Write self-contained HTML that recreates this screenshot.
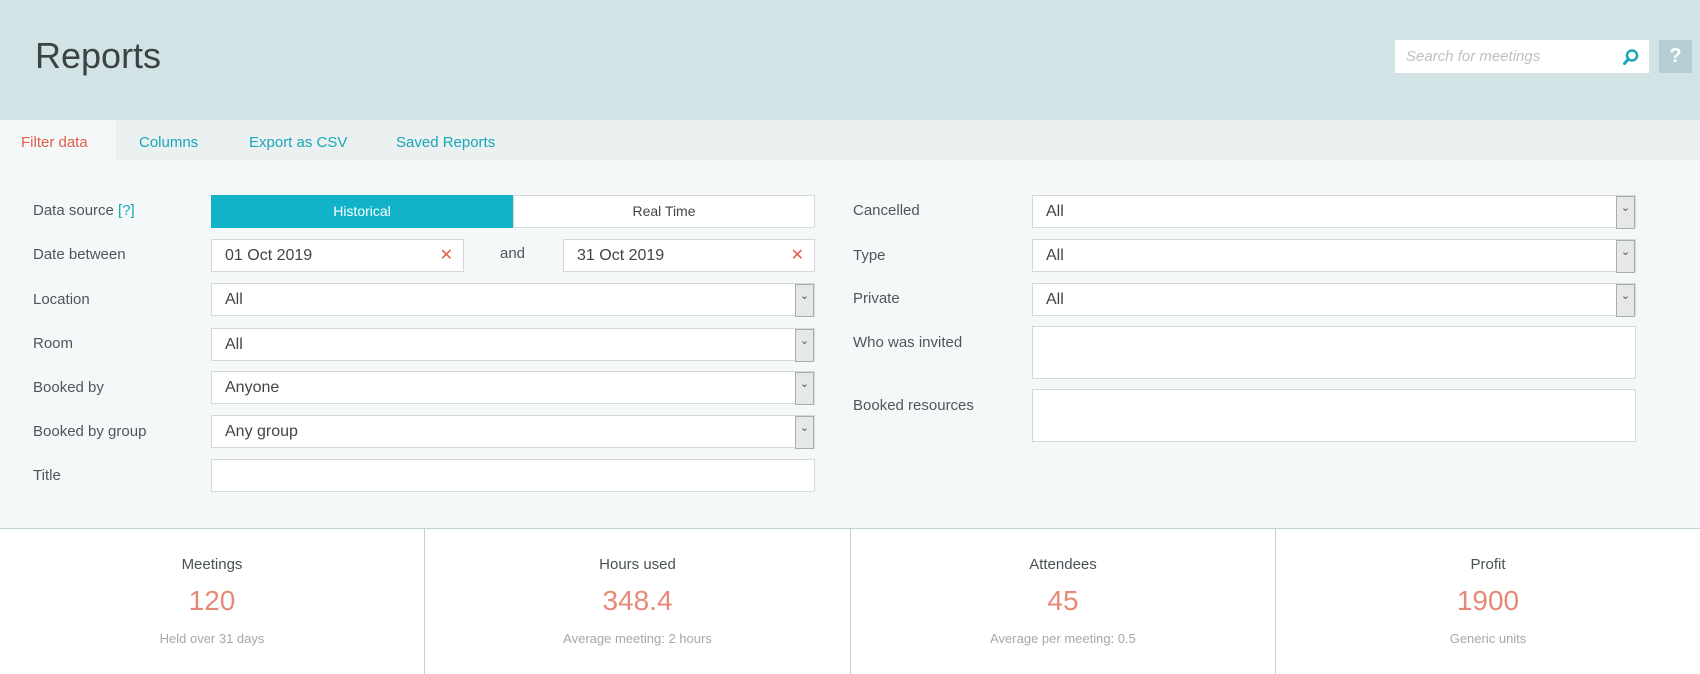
<!DOCTYPE html>
<html><head><meta charset="utf-8"><style>
*{box-sizing:border-box;margin:0;padding:0}
body{width:1700px;height:674px;overflow:hidden;background:#f5f8f8;font-family:"Liberation Sans",sans-serif;color:#555d60;position:relative}
.a{position:absolute}
.hdr{left:0;top:0;width:1700px;height:120px;background:#d2e3e6}
.tabs{left:0;top:120px;width:1700px;height:40px;background:#ebf0f1}
.tab{top:123px;height:40px;line-height:40px;font-size:15px;color:#1aa6b7}
.lbl{font-size:15px;color:#4f5659}
.box{background:#fff;border:1px solid #d4d9da;height:33px;font-size:16px;line-height:31px;padding-left:13px;color:#444}
.sel::after{content:"⌄";position:absolute;right:0;top:0;width:17px;height:31px;background:#e5e7e8;border:1px solid #a9adae;font-size:11px;line-height:22px;text-align:center;color:#555}
.x{position:absolute;right:10px;top:0;color:#e0604c;font-size:16px}
.stat{top:528px;height:146px;background:#fff;text-align:center;border-top:1px solid #bfd3d6}
.st{margin-top:27px;font-size:15px;color:#4a5154}
.sn{margin-top:12px;font-size:28px;color:#e68a78}
.ss{margin-top:14px;font-size:13px;color:#a3a9ab}
</style></head><body>
<div class="a hdr"></div>
<div class="a" style="left:35px;top:35px;font-size:36px;color:#3d4244">Reports</div>
<div class="a" style="left:1395px;top:40px;width:254px;height:33px;background:#fff;font-size:15px;font-style:italic;color:#bcc1c3;line-height:33px;padding-left:11px">Search for meetings</div>
<svg class="a" style="left:1622px;top:48px" width="18" height="18" viewBox="0 0 18 18"><circle cx="10" cy="7.5" r="5" fill="none" stroke="#1aa6b7" stroke-width="2.5"/><path d="M6.5 11 L2.5 15.5" stroke="#1aa6b7" stroke-width="3" stroke-linecap="round"/></svg>
<div class="a" style="left:1659px;top:40px;width:33px;height:33px;background:#b6cdd3;color:#fff;font-weight:bold;font-size:20px;text-align:center;line-height:33px">?</div>
<div class="a tabs"></div>
<div class="a" style="left:0;top:120px;width:116px;height:40px;background:#f5f8f8"></div>
<div class="a tab" style="left:21px;color:#e0604c">Filter data</div>
<div class="a tab" style="left:139px">Columns</div>
<div class="a tab" style="left:249px">Export as CSV</div>
<div class="a tab" style="left:396px">Saved Reports</div>

<div class="a lbl" style="left:33px;top:202px">Data source <span style="color:#1aa6b7">[?]</span></div>
<div class="a" style="left:211px;top:195px;width:302px;height:33px;background:#12b3c9;color:#fff;font-size:14px;text-align:center;line-height:33px">Historical</div>
<div class="a" style="left:513px;top:195px;width:302px;height:33px;background:#fff;border:1px solid #d4d9da;color:#444;font-size:14px;text-align:center;line-height:31px">Real Time</div>

<div class="a lbl" style="left:33px;top:246px">Date between</div>
<div class="a box" style="left:211px;top:239px;width:253px">01 Oct 2019<span class="x">✕</span></div>
<div class="a lbl" style="left:500px;top:245px">and</div>
<div class="a box" style="left:563px;top:239px;width:252px">31 Oct 2019<span class="x">✕</span></div>

<div class="a lbl" style="left:33px;top:291px">Location</div>
<div class="a box sel" style="left:211px;top:283px;width:604px">All</div>
<div class="a lbl" style="left:33px;top:335px">Room</div>
<div class="a box sel" style="left:211px;top:328px;width:604px">All</div>
<div class="a lbl" style="left:33px;top:379px">Booked by</div>
<div class="a box sel" style="left:211px;top:371px;width:604px">Anyone</div>
<div class="a lbl" style="left:33px;top:423px">Booked by group</div>
<div class="a box sel" style="left:211px;top:415px;width:604px">Any group</div>
<div class="a lbl" style="left:33px;top:467px">Title</div>
<div class="a box" style="left:211px;top:459px;width:604px"></div>

<div class="a lbl" style="left:853px;top:202px">Cancelled</div>
<div class="a box sel" style="left:1032px;top:195px;width:604px">All</div>
<div class="a lbl" style="left:853px;top:247px">Type</div>
<div class="a box sel" style="left:1032px;top:239px;width:604px">All</div>
<div class="a lbl" style="left:853px;top:290px">Private</div>
<div class="a box sel" style="left:1032px;top:283px;width:604px">All</div>
<div class="a lbl" style="left:853px;top:334px">Who was invited</div>
<div class="a box" style="left:1032px;top:326px;width:604px;height:53px"></div>
<div class="a lbl" style="left:853px;top:397px">Booked resources</div>
<div class="a box" style="left:1032px;top:389px;width:604px;height:53px"></div>

<div class="a stat" style="left:0;width:424px"><div class="st">Meetings</div><div class="sn">120</div><div class="ss">Held over 31 days</div></div>
<div class="a stat" style="left:424px;width:426px;border-left:1px solid #bfd3d6"><div class="st">Hours used</div><div class="sn">348.4</div><div class="ss">Average meeting: 2 hours</div></div>
<div class="a stat" style="left:850px;width:425px;border-left:1px solid #bfd3d6"><div class="st">Attendees</div><div class="sn">45</div><div class="ss">Average per meeting: 0.5</div></div>
<div class="a stat" style="left:1275px;width:425px;border-left:1px solid #bfd3d6"><div class="st">Profit</div><div class="sn">1900</div><div class="ss">Generic units</div></div>
</body></html>
